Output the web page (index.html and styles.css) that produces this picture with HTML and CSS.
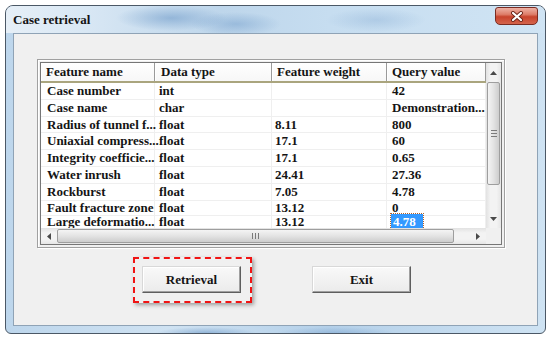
FILE: index.html
```html
<!DOCTYPE html>
<html lang="en">
<head>
  <meta charset="UTF-8" />
  <meta name="viewport" content="width=device-width, initial-scale=1.0"/>
  <title>Case retrieval</title>

  <link rel="stylesheet" href="styles.css">
</head>

<body>
  <div class="window">
    <div class="titlebar">
      <span class="title">Case retrieval</span>
      <button class="close" aria-label="Close">
        <svg width="14" height="11" viewBox="0 0 14 11">
          <path d="M3 2 L11 9 M11 2 L3 9" stroke="#6b2418" stroke-width="4" stroke-linecap="round"/>
          <path d="M3 2 L11 9 M11 2 L3 9" stroke="#fff" stroke-width="2.2" stroke-linecap="round"/>
        </svg>
      </button>
    </div>

    <div class="client">
      <div class="frame">
        <div class="list">
          <div class="table-area">
            <div class="head">
              <span>Feature name</span>
              <span>Data type</span>
              <span>Feature weight</span>
              <span>Query value</span>
            </div>
            <div class="row"><span>Case number</span><span>int</span><span></span><span>42</span></div>
            <div class="row"><span>Case name</span><span>char</span><span></span><span>Demonstration...</span></div>
            <div class="row"><span>Radius of tunnel f...</span><span>float</span><span>8.11</span><span>800</span></div>
            <div class="row"><span>Uniaxial compress...</span><span>float</span><span>17.1</span><span>60</span></div>
            <div class="row"><span>Integrity coefficie...</span><span>float</span><span>17.1</span><span>0.65</span></div>
            <div class="row"><span>Water inrush</span><span>float</span><span>24.41</span><span>27.36</span></div>
            <div class="row"><span>Rockburst</span><span>float</span><span>7.05</span><span>4.78</span></div>
            <div class="row row-short"><span>Fault fracture zone</span><span>float</span><span>13.12</span><span>0</span></div>
            <div class="row row-last"><span>Large deformatio...</span><span>float</span><span>13.12</span><span><em class="selected">4.78</em></span></div>
          </div>

          <div class="vscroll">
            <div class="arrow">
              <svg width="7" height="4" viewBox="0 0 7 4"><polygon points="0,4 3.5,0 7,4" fill="#4a4a4a"/></svg>
            </div>
            <div class="thumb-v"><i></i><i></i><i></i></div>
            <div class="spacer"></div>
            <div class="arrow">
              <svg width="7" height="4" viewBox="0 0 7 4"><polygon points="0,0 3.5,4 7,0" fill="#4a4a4a"/></svg>
            </div>
          </div>

          <div class="hscroll">
            <div class="arrow">
              <svg width="4" height="7" viewBox="0 0 4 7"><polygon points="4,0 0,3.5 4,7" fill="#4a4a4a"/></svg>
            </div>
            <div class="thumb-h"><i></i><i></i><i></i></div>
            <div class="spacer"></div>
            <div class="arrow">
              <svg width="4" height="7" viewBox="0 0 4 7"><polygon points="0,0 4,3.5 0,7" fill="#4a4a4a"/></svg>
            </div>
          </div>

          <div class="corner"></div>
        </div>
      </div>

      <div class="actions">
        <div class="highlight">
          <button class="btn">Retrieval</button>
        </div>
        <button class="btn exit">Exit</button>
      </div>
    </div>
  </div>
</body>
</html>
```

FILE: styles.css
```css
body {
  margin: 0;
  background: #fff;
  font-family: "Liberation Serif", "Times New Roman", serif;
  color: #141414;
}

.window {
  width: 539px;
  height: 327px;
  margin: 5px 0 0 5px;
  border: 1px solid #4b5866;
  border-radius: 8px 8px 6px 6px;
  overflow: hidden;
  display: flex;
  flex-direction: column;
  background:
    radial-gradient(ellipse 50px 6px at 200px 100%, rgba(80, 130, 185, .45), transparent),
    radial-gradient(ellipse 60px 6px at 330px 100%, rgba(80, 130, 185, .3), transparent),
    linear-gradient(to right, #bdd6ec, #cfe2f2 30%, #b4d0e9 60%, #cfe3f3);
}

.titlebar {
  height: 27px;
  flex-shrink: 0;
  display: flex;
  justify-content: space-between;
  align-items: flex-start;
  padding: 0 7px 0 7px;
  background:
    radial-gradient(ellipse 55px 13px at 165px 12px, rgba(85, 135, 190, .45), transparent),
    radial-gradient(ellipse 45px 12px at 230px 18px, rgba(85, 135, 190, .35), transparent),
    radial-gradient(ellipse 50px 12px at 370px 14px, rgba(100, 145, 195, .25), transparent),
    linear-gradient(to right, #e6eff7 0%, #d8e7f4 15%, #bed6eb 40%, #c6ddf0 60%, #d0e4f4 100%);
}

.title {
  font-weight: bold;
  font-size: 13px;
  line-height: 15px;
  margin-top: 6px;
}

.close {
  width: 43px;
  height: 18px;
  margin-top: 1px;
  padding: 0;
  border: 1px solid #7a2c22;
  border-radius: 3px 3px 5px 5px;
  background: linear-gradient(#eeb1a4 0%, #de7d69 40%, #c8432c 55%, #d4644c 100%);
  display: flex;
  align-items: center;
  justify-content: center;
}

.client {
  height: 291px;
  margin: 0 7px;
  border: 1px solid #8fa3b6;
  background: #f0f0f0;
}

.frame {
  width: 462px;
  height: 183px;
  margin: 25px 0 0 23px;
  padding: 2px;
  border: 1px solid #a0a0a0;
  box-shadow: 1px 1px 0 #fff, inset 1px 1px 0 #fff;
}

.list {
  box-sizing: border-box;
  width: 462px;
  height: 183px;
  border: 1px solid #767676;
  background: #fff;
  display: grid;
  grid-template-columns: 445px 15px;
  grid-template-rows: 165px 16px;
}

.table-area {
  overflow: hidden;
  font-weight: bold;
  font-size: 13px;
}

.head,
.row {
  display: grid;
  grid-template-columns: 114px 117px 115px 99px;
}

.head {
  height: 20px;
  box-sizing: border-box;
  border-bottom: 2px solid #aaa57e;
  background: linear-gradient(#fff, #f7f7f7);
}

.head span {
  padding-left: 5px;
  line-height: 18px;
  border-right: 1px solid #9a9a9a;
  box-shadow: inset 1px 0 0 #fff;
  white-space: nowrap;
}

.head span:nth-child(2) {
  padding-left: 6px;
}

.row {
  height: 16.8px;
}

.row span {
  box-sizing: border-box;
  line-height: 15.8px;
  padding-left: 5px;
  border-right: 1px solid #efefef;
  border-bottom: 1px solid #efefef;
  white-space: nowrap;
}

.row-short {
  height: 15.5px;
}

.row-short span {
  line-height: 14.5px;
}

.row-last {
  height: 12px;
}

.row-last span {
  line-height: 11px;
  border-bottom: 0;
}

.row span:nth-child(1) {
  padding-left: 6px;
}

.row span:nth-child(2) {
  padding-left: 4px;
}

.row span:nth-child(3) {
  padding-left: 3px;
}

.selected {
  font-style: normal;
  margin-left: -1px;
  padding: 0 7px 0 2px;
  background: #3399ff;
  color: #fff;
  outline: 1px dotted #b0602a;
}

.vscroll {
  display: flex;
  flex-direction: column;
  background: linear-gradient(to right, #e2e2e2, #f3f3f3 30%, #f3f3f3 70%, #e6e6e6);
}

.hscroll {
  display: flex;
  background: linear-gradient(#e2e2e2, #f3f3f3 30%, #f3f3f3 70%, #e6e6e6);
}

.vscroll .arrow {
  height: 19px;
  display: flex;
  align-items: center;
  justify-content: center;
}

.hscroll .arrow {
  width: 16px;
  display: flex;
  align-items: center;
  justify-content: center;
}

.spacer {
  flex: 1;
}

.thumb-v {
  box-sizing: border-box;
  height: 103px;
  margin: 0 1px;
  border: 1px solid #9e9e9e;
  border-radius: 2px;
  background: linear-gradient(to right, #f4f4f4, #e3e3e3 50%, #cdcdcd);
  display: flex;
  flex-direction: column;
  align-items: center;
  justify-content: center;
  gap: 2px;
}

.thumb-v i {
  width: 6px;
  height: 1px;
  background: #7a7a7a;
}

.thumb-h {
  box-sizing: border-box;
  width: 397px;
  margin: 1px 0;
  border: 1px solid #9e9e9e;
  border-radius: 2px;
  background: linear-gradient(#f4f4f4, #e3e3e3 50%, #cdcdcd);
  display: flex;
  align-items: center;
  justify-content: center;
  gap: 2px;
}

.thumb-h i {
  width: 1px;
  height: 6px;
  background: #7a7a7a;
}

.corner {
  background: #f0f0f0;
}

.actions {
  display: flex;
  align-items: flex-start;
  margin: 9px 0 0 119px;
}

.highlight {
  border: 2px dashed #f01414;
  padding: 7px 9px 8px 7px;
  box-shadow: 2px 2px 4px rgba(0, 0, 0, .35);
}

.btn {
  box-sizing: border-box;
  width: 99px;
  height: 27px;
  padding: 0;
  font-family: "Liberation Serif", "Times New Roman", serif;
  font-weight: bold;
  font-size: 13px;
  color: #141414;
  background: linear-gradient(#f9f9f9, #ebebeb);
  border: 1px solid;
  border-color: #d8d8d8 #5e5e5e #5e5e5e #d8d8d8;
  box-shadow: inset -1px -1px 0 #a0a0a0, inset 1px 1px 0 #fff;
}

.exit {
  margin: 9px 0 0 60px;
}
```
